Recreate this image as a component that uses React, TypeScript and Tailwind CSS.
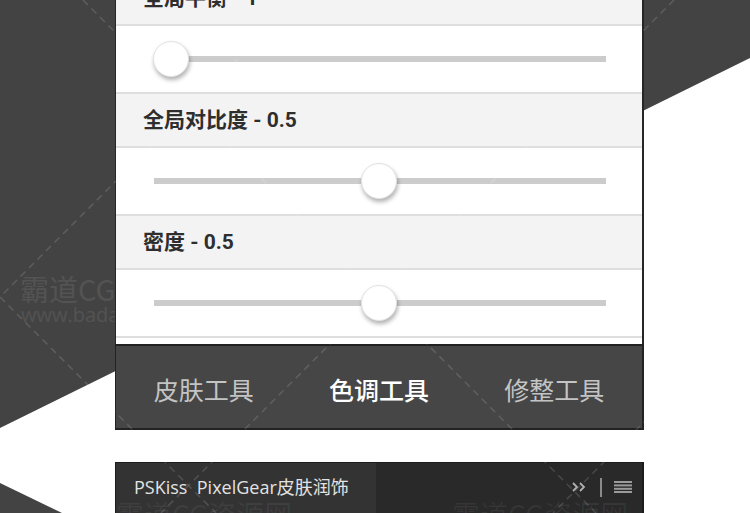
import React from "react";

const cjk = "font-['Roboto','Noto_Sans_CJK_SC',sans-serif]";

const sections = [
  { label: "全局平衡", value: "1", v: 0 },
  { label: "全局对比度", value: "0.5", v: 0.5 },
  { label: "密度", value: "0.5", v: 0.5 },
];

const Slider = ({ v }: { v: number }) => (
  <div className="h-[66px] bg-white flex items-center pl-[38px] pr-[36px]">
    <div className="relative h-[6px] w-full bg-[#cccccc]">
      <div
        className="absolute top-1/2 -translate-y-1/2 h-[36px] w-[36px] rounded-full bg-white border border-[#e2e2e2] shadow-[1px_3px_4px_rgba(0,0,0,0.3)]"
        style={{ left: `calc(${v} * (100% - 36px) - 1px)` }}
      />
    </div>
  </div>
);

const Section = ({ label, value, v }: { label: string; value: string; v: number }) => (
  <>
    <div className="h-[52px] bg-[#f3f3f3] flex items-center pl-[27px] pt-[2px]">
      <span className={`${cjk} text-[21px] font-bold text-[#2e2e2e]`}>
        {label} - {value}
      </span>
    </div>
    <div className="h-[2px] bg-[#dedede]" />
    <Slider v={v} />
    <div className="h-[2px] bg-[#dedede]" />
  </>
);

const Backdrop = () => (
  <svg className="absolute inset-0" width="750" height="513" viewBox="0 0 750 513">
    <rect width="750" height="513" fill="#ffffff" />
    <polygon points="0,0 750,0 750,58 0,428" fill="#434343" />
    <polygon points="0,483 62,513 0,513" fill="#434343" />
    <text x="20" y="301" fontSize="29" fill="#535353" fontFamily="Noto Sans CJK SC, sans-serif">
      霸道CG资源网
    </text>
    <text x="21" y="322" fontSize="20" fill="#535353" fontFamily="Open Sans, sans-serif">
      www.badaocg.com
    </text>
  </svg>
);

const Lattice = () => (
  <svg
    className="absolute inset-0 pointer-events-none"
    width="750"
    height="513"
    viewBox="0 0 750 513"
  >
    <g stroke="rgba(255,255,255,0.14)" strokeWidth="1.5" strokeDasharray="7 5" fill="none">
      <line x1="83" y1="0" x2="596" y2="513" />
      <line x1="0" y1="297" x2="216" y2="513" />
      <line x1="297" y1="0" x2="0" y2="297" />
      <line x1="674" y1="0" x2="161" y2="513" />
      <line x1="750" y1="316" x2="553" y2="513" />
    </g>
  </svg>
);

export default function App() {
  return (
    <div className="relative w-[750px] h-[513px] overflow-hidden bg-white">
      <Backdrop />
      <div className="relative ml-[115px] w-[529px]">
        <div className="-mt-[28px] border-l border-r-2 border-[#262626] bg-white">
          {sections.map((s) => (
            <Section key={s.label} {...s} />
          ))}
          <div className="h-[6px] bg-white" />
        </div>
        <div className="h-[86px] bg-[#464646] border-t-2 border-l border-r-2 border-b-2 border-[#222222] grid grid-cols-3 items-center pt-[9px]">
          <div className={`${cjk} text-center text-[25px] text-[#c4c4c4]`}>皮肤工具</div>
          <div className={`${cjk} text-center text-[25px] text-white font-medium`}>色调工具</div>
          <div className={`${cjk} text-center text-[25px] text-[#c4c4c4]`}>修整工具</div>
        </div>
        <div className="h-[32px]" />
        <div className="relative h-[51px] bg-[#292929] border-t border-l border-r-2 border-[#1c1c1c] flex items-stretch">
          <div className="w-[260px] bg-[#333333] flex items-center pl-[18px] pb-[2px]">
            <span className="font-['Open_Sans','Noto_Sans_CJK_SC',sans-serif] text-[18px] text-[#e2e2e2] whitespace-pre">
              PSKiss  PixelGear皮肤润饰
            </span>
          </div>
          <div className="flex-1 flex items-center justify-end gap-[12px] pr-[10px] pb-[2px]">
            <svg width="16" height="10" viewBox="0 0 16 10">
              <path d="M1 1 L5 5 L1 9 M8 1 L12 5 L8 9" stroke="#b0b0b0" strokeWidth="1.8" fill="none" />
            </svg>
            <div className="w-[2px] h-[19px] bg-[#8a8a8a]" />
            <svg width="18" height="12" viewBox="0 0 18 12">
              <g fill="#9a9a9a">
                <rect x="0" y="0" width="18" height="2" />
                <rect x="0" y="3.4" width="18" height="2" />
                <rect x="0" y="6.8" width="18" height="2" />
                <rect x="0" y="10" width="18" height="2" />
              </g>
            </svg>
          </div>
          <div className="absolute left-[0px] top-[30px] pointer-events-none font-['Noto_Sans_CJK_SC',sans-serif] text-[28px] text-white/[0.06] whitespace-nowrap">
            霸道CG资源网
          </div>
          <div className="absolute left-[336px] top-[30px] pointer-events-none font-['Noto_Sans_CJK_SC',sans-serif] text-[28px] text-white/[0.06] whitespace-nowrap">
            霸道CG资源网
          </div>
        </div>
      </div>
      <Lattice />
    </div>
  );
}
